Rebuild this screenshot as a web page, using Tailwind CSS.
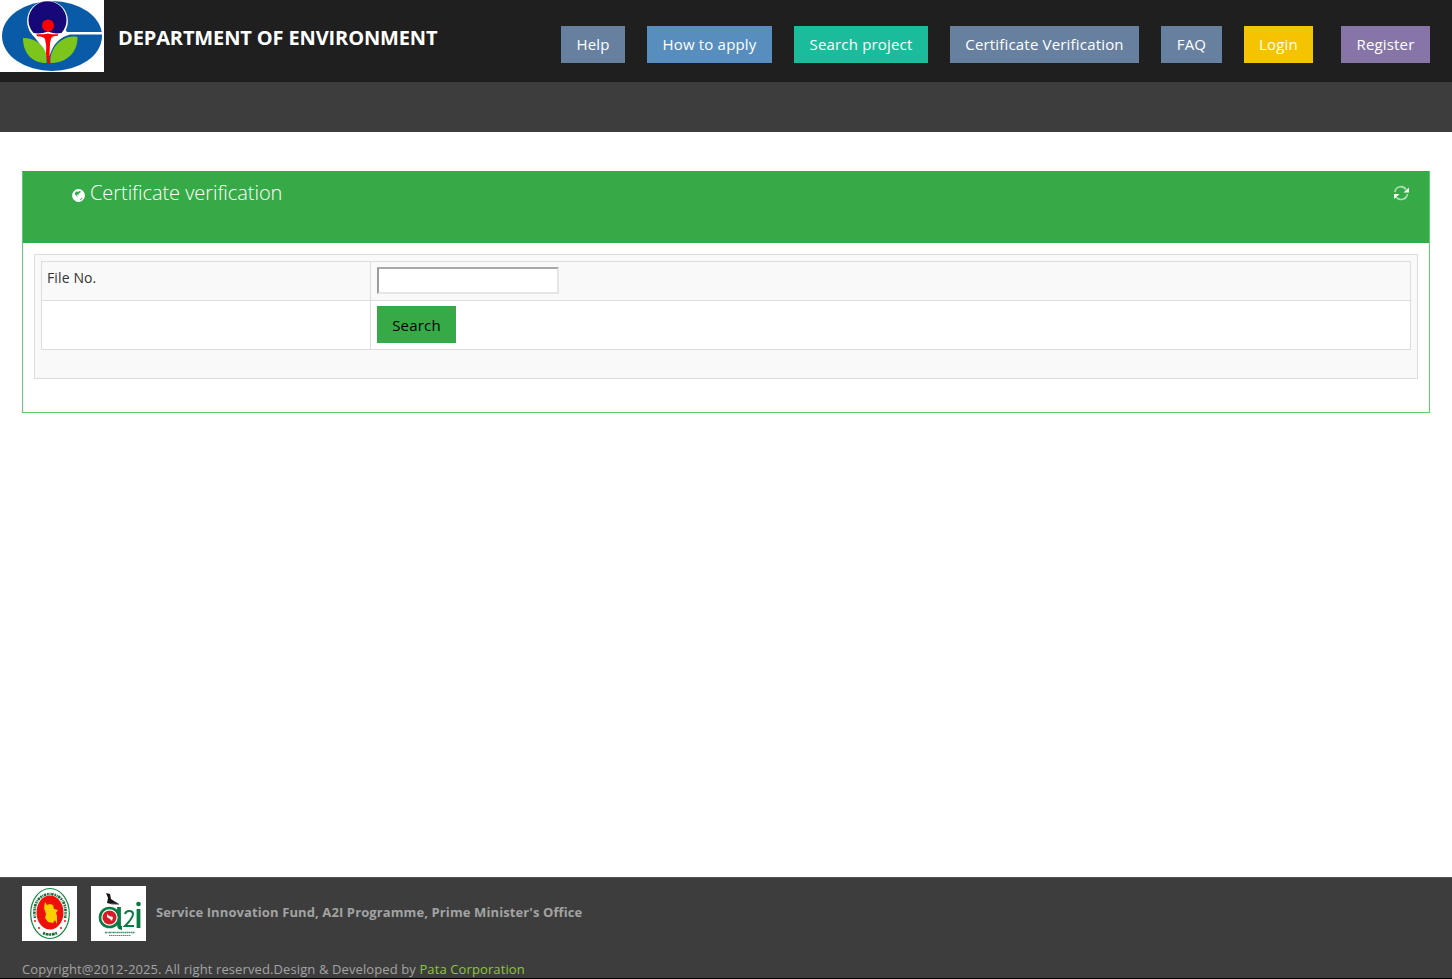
<!DOCTYPE html>
<html lang="en">
<head>
<meta charset="utf-8">
<title>Department of Environment</title>
<script src="https://cdn.jsdelivr.net/npm/@tailwindcss/browser@4"></script>
</head>
<body class="flex h-[979px] flex-col overflow-hidden bg-white font-['Open_Sans',sans-serif] text-[13px] text-[#333]">
<header class="flex h-[82px] shrink-0 items-start bg-[#1f1f1f] pr-[22px]">
  <svg class="h-[72px] w-[104px] shrink-0" viewBox="0 0 104 72">
    <rect width="104" height="72" fill="#fff"/>
    <ellipse cx="52" cy="36" rx="50" ry="35" fill="#095ba8"/>
    <circle cx="47.500" cy="21" r="20.400" fill="#fff"/>
    <path d="M29 30C34 38 42 44 46 56H49.500C53 44 60 37 70 34.500H102V32H67L64 28Z" fill="#fff"/>
    <path d="M33.500 33A19 19 0 1 1 61.500 33Q56 34 51 32.500L48 31.500 44 32.800Q38 34 33.500 33Z" fill="#160878"/>
    <circle cx="48" cy="25.500" r="6" fill="#f00"/>
    <path d="M23 38c12 0 22 7 23.500 18v7C32 63 23 53 23 38ZM77.500 37C63 34 49 48 50.500 63 66 63 78 53 77.500 37Z" fill="#7cc51b"/>
    <path d="M36.500 34.200h7.500l4-.7 4 .7h6v1.600q-6 0-7 3l-1 5-.5 10 .5 9.500h-2l-2-9 .2-9-1.200-6q-1-3-8-3Z" fill="#f00"/>
  </svg>
  <h1 class="ml-[14px] mt-[24px] w-[443px] shrink-0 whitespace-nowrap text-[20px] font-bold leading-[28px] tracking-[-0.13px] text-white">DEPARTMENT OF ENVIRONMENT</h1>
  <nav class="mt-[26px] flex gap-[22px] whitespace-nowrap text-center text-[15px] leading-[37px] tracking-[0.18px] text-white">
    <a class="w-[64px] bg-[#67809f]">Help</a>
    <a class="w-[125px] bg-[#578ebe]">How to apply</a>
    <a class="w-[134px] bg-[#1bbc9b]">Search project</a>
    <a class="w-[189px] bg-[#67809f]">Certificate Verification</a>
    <a class="w-[61px] bg-[#67809f]">FAQ</a>
    <a class="w-[69px] bg-[#f4c400]">Login</a>
    <a class="ml-[6px] w-[89px] bg-[#8775a7]">Register</a>
  </nav>
</header>
<div class="h-[50px] shrink-0 bg-[#3d3d3d]"></div>

<main class="flex-1 px-[22px] pt-[39px]">
  <section class="h-[242px] border border-[#5bce6e] border-t-[#37aa48]">
    <div class="flex h-[71px] items-start bg-[#37aa48] pl-[49px] pr-[20px] text-white">
      <svg class="mt-[16.500px] h-[13px] w-[13px]" viewBox="0 0 13 13"><circle cx="6.500" cy="6.500" r="6.400" fill="#fff"/><path d="M3.500 3 5 2.200 6 3 7.500 2 9 2.600 8.200 3.800 7 4.300 6.500 5.800 5.200 5.600 5 6.500 6 7.200 5.500 7.800 4 6.500 2.800 5ZM9 9.500 10.300 8.800 10 10 8.300 11 7.800 10.500Z" fill="#37aa48"/></svg>
      <h2 class="ml-[5px] mt-[7px] text-[20px] font-light leading-[28px] tracking-[-0.06px]">Certificate verification</h2>
      <svg class="ml-auto mt-[13px] h-[16px] w-[16px]" viewBox="0 0 16 16" fill="none"><path d="M1.800 7C3 .8 10 0 13 4.500M14.500 9C13.500 15 6 16 3 12" stroke="#fff" stroke-opacity=".6" stroke-width="1.600"/><path d="M16 2.500v5h-5.500ZM1 14V9H6.500Z" fill="#fff"/></svg>
    </div>
    <div class="mx-[11px] mt-[11px] h-[125px] border border-[#ddd] bg-[#f9f9f9] p-[6px]">
      <div class="grid h-[89px] grid-cols-[329px_1fr] grid-rows-[39px_1fr] border border-[#ddd] text-[14px]">
        <div class="border-b border-r border-[#ddd] pl-[5px] pt-[6px] leading-[20px] tracking-[0.12px]">File No.</div>
        <div class="border-b border-[#ddd] pl-[6px] pt-[5px]"><input type="text" class="block h-[27px] w-[182px] border-2 border-solid border-[#e5e5e5] border-l-[#9c9c9c] border-t-[#a8a8a8] bg-white"></div>
        <div class="border-r border-[#ddd] bg-white"></div>
        <div class="bg-white pl-[6px] pt-[5px]"><button class="block h-[37px] w-[79px] bg-[#37aa48] pt-px text-[15px] leading-[37px] tracking-[0.18px] text-black">Search</button></div>
      </div>
    </div>
  </section>
</main>

<footer class="h-[102px] shrink-0 border-b border-t border-b-black border-t-[#555] bg-[#3d3d3d] px-[22px] pt-[8px] tracking-[0.108px] text-[#a3a3a3]">
  <div class="flex h-[55px]">
    <svg class="h-[55px] w-[55px] shrink-0" viewBox="0 0 55 55">
      <rect width="55" height="55" fill="#fff"/>
      <ellipse cx="28" cy="27.500" rx="19.300" ry="25" fill="none" stroke="#16843e" stroke-width="1.200"/>
      <path d="M13 32C7 0 49 0 43 32" fill="none" stroke="#176d39" stroke-width="2.600" stroke-dasharray="1.600 .8 1 .7 2.400 .9"/>
      <path d="M21 47q7 3 14 0" fill="none" stroke="#176d39" stroke-width="2.600" stroke-dasharray="2 .7 3 .6"/>
      <ellipse cx="28" cy="26.500" rx="13.500" ry="17" fill="#ed100b"/>
      <path d="m23 16 2 3 3-1 3 1 1 4 4 1-2 3 1 3 0 8-2-4-2 3-5-1-3-4 1-4-1-3-1-3Z" fill="#ffd000"/>
      <g fill="#ed100b"><circle cx="13" cy="35" r="1"/><circle cx="17" cy="42" r="1"/><circle cx="43" cy="35" r="1"/><circle cx="39" cy="42" r="1"/></g>
    </svg>
    <svg class="ml-[14px] h-[55px] w-[55px] shrink-0" viewBox="0 0 55 55">
      <rect width="55" height="55" fill="#fff"/>
      <path d="m15 7 4 1 1 5 3 2 5 3-8 0-4-1 1-5Z" fill="#171717"/>
      <path d="m20 18 8 .5" stroke="#888"/>
      <path d="M28 21v18q0 3 3 3M47.500 23v19" fill="none" stroke="#087b42" stroke-width="3.800"/>
      <circle cx="18.500" cy="31.500" r="9.500" fill="#fff" stroke="#087b42" stroke-width="2.600"/>
      <circle cx="18.500" cy="31.500" r="7" fill="#d51d28"/>
      <path d="m16 28 2 2 4 1-1 4-2-2-3-2Z" fill="#fff"/>
      <path d="M34 28c1-4 8-4 8 0 0 4-4 8-8 12h9" fill="none" stroke="#087b42" stroke-width="2"/>
      <circle cx="47.500" cy="18" r="2.300" fill="#087b42"/>
      <path d="M14 46.500h30" stroke="#3b916a" stroke-width="1.500" stroke-dasharray="2 .5 1 .4"/>
      <path d="M18 49.500h22" stroke="#777" stroke-dasharray="1 .5 2 .5"/>
    </svg>
    <p class="ml-[10px] mt-[16px] whitespace-nowrap font-bold leading-[20px]">Service Innovation Fund, A2I Programme, Prime Minister's Office</p>
  </div>
  <p class="mt-[18px] whitespace-nowrap leading-[20px]">Copyright@2012-2025. All right reserved.Design &amp; Developed by <a class="text-[#8dc63f]">Pata Corporation</a></p>
</footer>
</body>
</html>
